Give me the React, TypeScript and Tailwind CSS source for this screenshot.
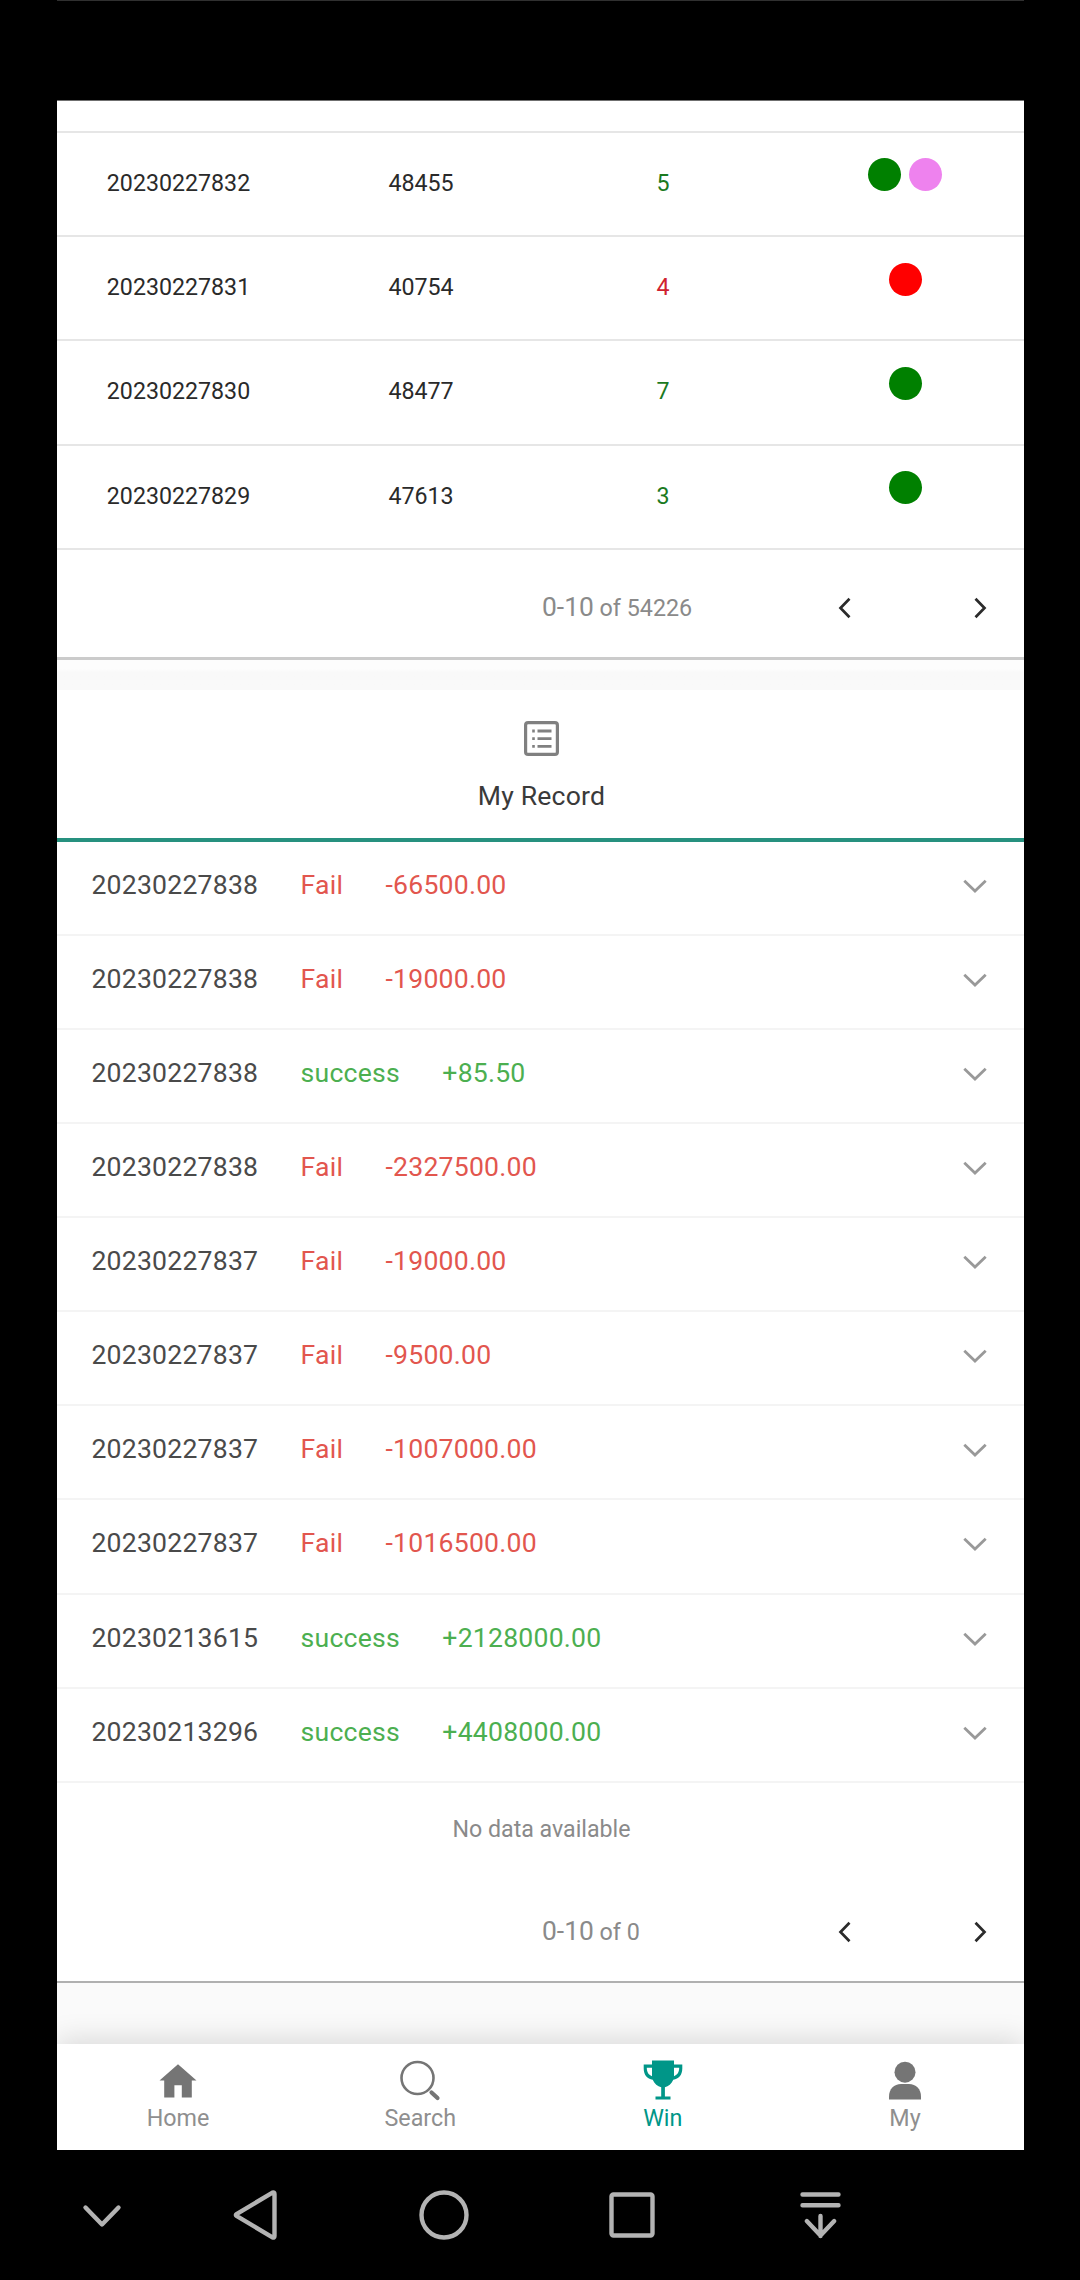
import React from "react";

const draws = [
  { period: "20230227832", price: "48455", number: "5", tone: "text-[#1b7a1f]", dots: ["bg-[#008000]", "bg-[#ee82ee]"] },
  { period: "20230227831", price: "40754", number: "4", tone: "text-[#d0222f]", dots: ["bg-[#ff0000]"] },
  { period: "20230227830", price: "48477", number: "7", tone: "text-[#1b7a1f]", dots: ["bg-[#008000]"] },
  { period: "20230227829", price: "47613", number: "3", tone: "text-[#1b7a1f]", dots: ["bg-[#008000]"] },
];

const records = [
  { period: "20230227838", won: false, amount: "-66500.00" },
  { period: "20230227838", won: false, amount: "-19000.00" },
  { period: "20230227838", won: true, amount: "+85.50" },
  { period: "20230227838", won: false, amount: "-2327500.00" },
  { period: "20230227837", won: false, amount: "-19000.00" },
  { period: "20230227837", won: false, amount: "-9500.00" },
  { period: "20230227837", won: false, amount: "-1007000.00" },
  { period: "20230227837", won: false, amount: "-1016500.00" },
  { period: "20230213615", won: true, amount: "+2128000.00" },
  { period: "20230213296", won: true, amount: "+4408000.00" },
];

function Pager({ total }: { total: string }) {
  return (
    <div className="flex items-center pl-[485px] text-[#8a8a8a]">
      <div className="w-[295px] whitespace-pre text-[23.3px] leading-[30px]">
        <span className="text-[26.4px]">0-10</span> of {total}
      </div>
      <svg className="mt-[2px] h-6 w-4" viewBox="0 0 16 24" fill="none" stroke="#2b2b2b" strokeWidth="2.7">
        <path d="M12.5 2.8 3.5 12l9 9.2" />
      </svg>
      <svg className="mt-[2px] ml-[120px] h-6 w-4" viewBox="0 0 16 24" fill="none" stroke="#2b2b2b" strokeWidth="2.7">
        <path d="m2.5 2.8 9 9.2-9 9.2" />
      </svg>
    </div>
  );
}

function Tab({ label, active, children }: { label: string; active?: boolean; children: React.ReactNode }) {
  return (
    <div className={active ? "flex flex-col items-center text-[#009688]" : "flex flex-col items-center text-[#757575]"}>
      <svg className="mt-[16px] h-[44px] w-[44px]" viewBox="0 0 44 44" fill="currentColor">
        {children}
      </svg>
      <span className={active ? "text-[23.3px] leading-[28px]" : "text-[23.3px] leading-[28px] text-[#8f8f8f]"}>
        {label}
      </span>
    </div>
  );
}

export default function App() {
  return (
    <div className="flex h-[2280px] w-[1080px] flex-col bg-black pl-[57px] font-['Roboto',sans-serif]">
      <div className="h-[100px] w-[967px] shrink-0 border-t border-[#303030]" />

      <div className="flex h-[2050px] w-[967px] shrink-0 flex-col overflow-hidden border-t border-[#6f6f6f] bg-white">
        <div className="h-[32px] shrink-0 border-b-2 border-[#e6e6e6]" />
        {draws.map((d) => (
          <div
            key={d.period}
            className="grid h-[104.2px] shrink-0 grid-cols-[243px_242px_242px_242px] items-center border-b-2 border-[#e6e6e6] text-center text-[23.2px] leading-[28px] text-[#2a2a2a]"
          >
            <span className="pb-[2px]">{d.period}</span>
            <span className="pb-[2px]">{d.price}</span>
            <span className={`pb-[2px] ${d.tone}`}>{d.number}</span>
            <span className="flex justify-center gap-2 pb-[18.5px]">
              {d.dots.map((c) => (
                <i key={c} className={`size-[33px] rounded-full ${c}`} />
              ))}
            </span>
          </div>
        ))}
        <div className="flex h-[110px] shrink-0 flex-col justify-center border-b-[3px] border-[#cbcbcb] pt-[8px]">
          <Pager total="54226" />
        </div>
        <div className="h-[30px] shrink-0 bg-gradient-to-b from-[#fdfdfd] from-30% to-[#f9f9f9] to-40%" />

        <div className="flex h-[152px] shrink-0 flex-col items-center border-b-4 border-[#26917f] pt-[31px] pl-[2px]">
          <svg className="size-[35px]" viewBox="0 0 35 35" fill="none" stroke="#808080" strokeWidth="3.2">
            <rect x="1.6" y="1.6" width="31.8" height="31.8" rx="2.5" />
            <path d="M8.2 10h2.6M8.2 17.7h2.6M8.2 25.3h2.6M13.5 10h14M13.5 17.7h14M13.5 25.3h14" strokeWidth="2.8" />
          </svg>
          <h2 className="mt-[25px] text-[26.6px] leading-[30px] tracking-[0.2px] text-[#3a3a3a]">My Record</h2>
        </div>

        {records.map((r, i) => (
          <div
            key={i}
            className="flex h-[94.1px] shrink-0 items-center gap-[42.4px] border-b-2 border-[#f4f4f4] pr-[35.5px] pb-[6px] pl-[34.4px] text-[26.6px] leading-[30px] tracking-[0.22px] text-[#4a4a4a]"
          >
            <span>{r.period}</span>
            <span className={r.won ? "text-[#4caf50]" : "text-[#e2564e]"}>{r.won ? "success" : "Fail"}</span>
            <span className={r.won ? "text-[#4caf50]" : "text-[#e2564e]"}>{r.amount}</span>
            <svg className="mt-[2px] ml-auto h-[16px] w-[28px]" viewBox="0 0 28 16" fill="none" stroke="#999" strokeWidth="2.8">
              <path d="M3.3 2.8 14 13 24.7 2.8" />
            </svg>
          </div>
        ))}

        <p className="mt-[31px] h-[30px] shrink-0 pl-[2px] text-center text-[23.2px] leading-[30px] text-[#8a8a8a]">No data available</p>
        <div className="mt-[72px] h-[67px] shrink-0 border-b-2 border-[#b0b0b0]">
          <Pager total="0" />
        </div>
        <div className="flex-1 bg-[#fafafa]" />

        <nav className="relative grid h-[106px] shrink-0 grid-cols-[242px_242.5px_242.5px_242px] bg-white shadow-[0_-5px_26px_rgba(0,0,0,0.13)]">
          <Tab label="Home">
            <path d="M22 4.3 3.5 20.5h4.7v17h10.2V25.3h7.4v12.2h10V20.5h4.7z" />
          </Tab>
          <Tab label="Search">
            <circle cx="19.5" cy="18" r="16" fill="none" stroke="currentColor" strokeWidth="2.6" />
            <path d="m33.5 32.5 6 5.5" stroke="currentColor" strokeWidth="4.2" strokeLinecap="round" />
          </Tab>
          <Tab label="Win" active>
            <path d="M11 .5h22v4h8.3v4c0 6.3-3.5 10.5-9 11.3-1.8 4-4.8 6.7-8.4 7.4v9.3h5.6v3h-15v-3h5.7v-9.3c-3.7-.7-6.7-3.4-8.5-7.4-5.5-.8-9-5-9-11.3v-4H11zM11 7.7H5.8c0 4 1.5 7 5.2 8.5zM33 7.7v8.5c3.7-1.5 5.2-4.5 5.2-8.5z" fillRule="evenodd" />
          </Tab>
          <Tab label="My">
            <circle cx="22" cy="12.2" r="10.5" />
            <path d="M6 39.4v-3c0-7 5-12.3 12-12.3h8c7 0 12 5.3 12 12.3v3z" />
          </Tab>
        </nav>
      </div>

      <div className="flex h-[130px] w-[967px] items-center pl-[17px]">
        {[
          <path key="hide" d="m11.5 20.5 16.5 17 16.5-17" />,
          <path key="back" d="m9.5 27.1 36-21.5q2-.9 2 1.3v42.2q0 2.2-2 1.3l-36-21.5q-1.3-.9 0-1.8z" />,
          <circle key="home" cx="28" cy="28" r="22.5" />,
          <rect key="recent" x="7.5" y="7.5" width="41" height="41" rx="2" />,
          <path key="drawer" d="M10.5 7.5h36M10.5 18.2h36M28.5 29v20M14.8 34l13.7 14.5L42.2 34" />,
        ].map((icon, i) => (
          <svg
            key={i}
            className={
              i === 0
                ? "size-14 shrink-0"
                : i === 1
                  ? "ml-[97px] size-14 shrink-0"
                  : i === 2
                    ? "ml-[133px] size-14 shrink-0"
                    : "ml-[132px] size-14 shrink-0"
            }
            viewBox="0 0 56 56"
            fill="none"
            stroke="#b3b3b3"
            strokeWidth="4.4"
            strokeLinecap="round"
            strokeLinejoin="round"
          >
            {icon}
          </svg>
        ))}
      </div>
    </div>
  );
}
